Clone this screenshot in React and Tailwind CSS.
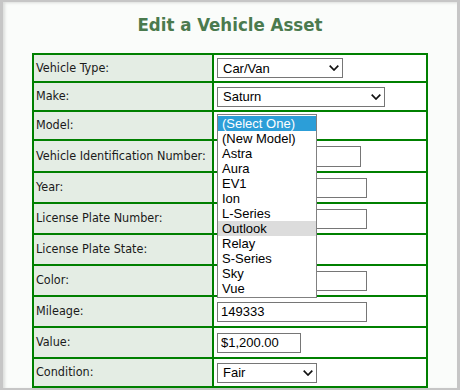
import React from "react";

const label = "font-['DejaVu_Sans_Condensed','DejaVu_Sans',sans-serif] text-[12.5px] text-[#1a1a1a]";
const ctl = "font-['Liberation_Sans',Arial,sans-serif] text-[13px] text-black";

function Chevron() {
  return (
    <svg width="10" height="6" viewBox="0 0 10 6" className="shrink-0">
      <path d="M0.7 0.7 L5 5 L9.3 0.7" fill="none" stroke="#111" strokeWidth="1.7" />
    </svg>
  );
}

function Select({ value, w }) {
  return (
    <div
      className={`${ctl} flex h-[20px] items-center justify-between border border-[#767676] bg-white pl-[5px] pr-[3px] leading-none ${w}`}
    >
      <span>{value}</span>
      <Chevron />
    </div>
  );
}

function Input({ value = "", w = "w-[150px]", h = "h-[20px]" }) {
  return (
    <div
      className={`${ctl} flex items-center overflow-hidden whitespace-nowrap border border-[#767676] bg-white px-[3px] leading-none ${w} ${h}`}
    >
      {value}
    </div>
  );
}

const models = [
  "(Select One)",
  "(New Model)",
  "Astra",
  "Aura",
  "EV1",
  "Ion",
  "L-Series",
  "Outlook",
  "Relay",
  "S-Series",
  "Sky",
  "Vue",
];

// open dropdown of the Model select, drawn over the rows below it
function ModelList() {
  return (
    <div className="relative h-[20px] w-[100px]">
      <Select value="(Select One)" w="w-[100px]" />
      <div className="absolute left-0 top-[-2px] z-10 w-[100px] border border-[#808080] bg-white py-px">
        {models.map((m, i) => (
          <div
            key={m}
            className={`${ctl} h-[15px] pl-[4px] leading-[15px] ${
              i === 0 ? "bg-[#2c9ed8] text-white" : i === 7 ? "bg-[#dcdcdc]" : ""
            }`}
          >
            {m}
          </div>
        ))}
      </div>
    </div>
  );
}

const rows = [
  { name: "Vehicle Type:", h: "h-[26px]", el: <Select value="Car/Van" w="w-[126px]" /> },
  { name: "Make:", h: "h-[27px]", el: <Select value="Saturn" w="w-[168px]" /> },
  { name: "Model:", h: "h-[27px]", el: <ModelList /> },
  {
    name: "Vehicle Identification Number:",
    h: "h-[30px]",
    el: <Input value="3GSCL33P7080" w="w-[144px]" h="h-[21px]" />,
  },
  { name: "Year:", h: "h-[29px]", el: <Input value="2008" /> },
  { name: "License Plate Number:", h: "h-[29px]", el: <Input value="" /> },
  { name: "License Plate State:", h: "h-[29px]", el: <Select value="(Select One)" w="w-[100px]" /> },
  { name: "Color:", h: "h-[29px]", el: <Input value="" /> },
  { name: "Mileage:", h: "h-[29px]", el: <Input value="149333" /> },
  { name: "Value:", h: "h-[29px]", el: <Input value="$1,200.00" w="w-[84px]" /> },
  { name: "Condition:", h: "h-[27px]", el: <Select value="Fair" w="w-[100px]" /> },
  { name: "Notes:", h: "h-[29px]", el: <Input value="" /> },
];

export default function App() {
  return (
    <div className="h-[390px] w-[460px] overflow-hidden border-b-2 border-l-[3px] border-r-[3px] border-t-2 border-[#c6c6c6] bg-[#fafcfa] shadow-[inset_2px_1px_3px_rgba(0,0,0,0.12)]">
      <h1 className="h-[51px] pt-[11px] text-center font-['DejaVu_Sans_Condensed','DejaVu_Sans',sans-serif] text-[18.5px] font-bold leading-[24px] text-[#4a7a4e]">
        Edit a Vehicle Asset
      </h1>
      <div className="ml-[29px] w-[396px] border-x-2 border-t-2 border-[#008000]">
        {rows.map((r, i) => (
          <div
            key={r.name}
            className={`flex ${i > 0 ? "border-t-2 border-[#008000]" : ""}`}
          >
            <div
              className={`${label} ${r.h} flex w-[180px] shrink-0 items-center border-r-2 border-[#008000] bg-[#e4ede4] pl-[2px] whitespace-nowrap`}
            >
              {r.name}
            </div>
            <div className={`${r.h} flex flex-1 items-center bg-white pl-[3px]`}>{r.el}</div>
          </div>
        ))}
      </div>
    </div>
  );
}
